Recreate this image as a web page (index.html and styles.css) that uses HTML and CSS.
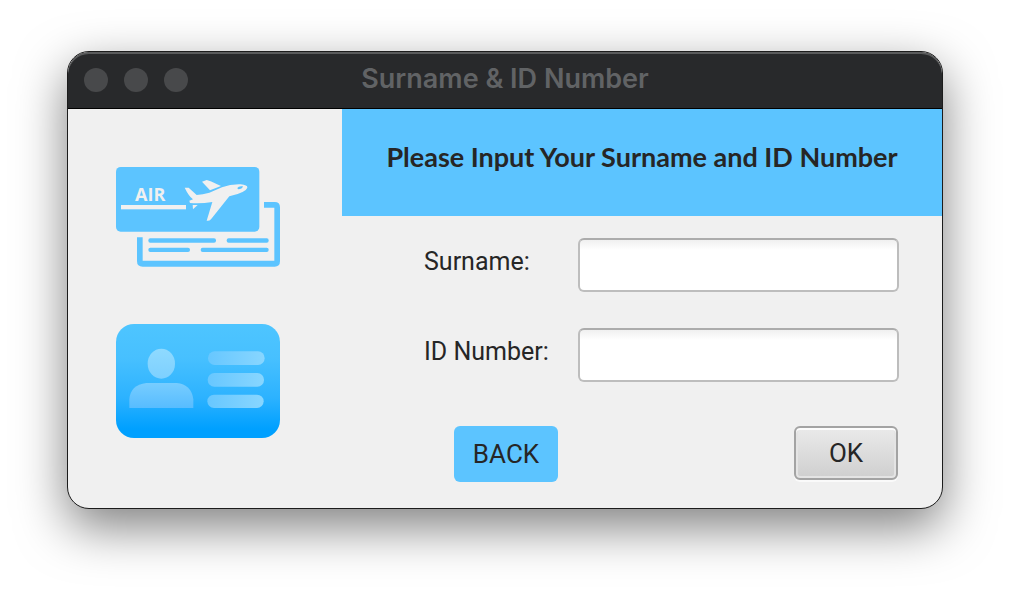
FILE: index.html
```html
<!DOCTYPE html>
<html lang="en">
<head>
<meta charset="utf-8">
<title>Surname &amp; ID Number</title>
<link rel="stylesheet" href="styles.css">
</head>
<body>
<main class="window">
  <header class="titlebar">
    <div class="lights"><span class="light"></span><span class="light"></span><span class="light"></span></div>
    <h1 class="title">Surname &amp; ID Number</h1>
  </header>
  <div class="content">
    <aside class="sidebar">
      <svg class="picture" viewBox="48 36 492 300" role="img" aria-label="Air ticket">
        <g fill="#5cc4ff">
          <rect x="48" y="36" width="430" height="194" rx="14"/>
          <path d="M492 141H524Q540 141 540 157V319Q540 335 524 335H128Q111 335 111 319V247H128V317H523V158H492Z"/>
          <rect x="145" y="250" width="203" height="13" rx="6"/>
          <rect x="380" y="250" width="126" height="13" rx="6"/>
          <rect x="145" y="278" width="125" height="13" rx="6"/>
          <rect x="302" y="278" width="204" height="13" rx="6"/>
        </g>
        <g fill="#f0f0f0">
          <text class="air" x="105" y="138">AIR</text>
          <rect x="63" y="150" width="195" height="13"/>
          <path d="M306 80L320 75Q326 75 363 93L330 106Z"/>
          <path d="M254 98L266 98L290 120Q308 119 328 113L366 97Q392 87 422 88Q443 90 442 98Q438 112 388 124L333 193Q327 199 320 197L337 141Q302 147 270 144L268 137L279 133Q266 123 254 98Z"/>
          <path d="M278 150H293L279 163Z"/>
        </g>
        <path fill="#5cc4ff" d="M412 99Q416 92 429 94Q427 103 414 103Z"/>
      </svg>
      <svg class="picture" viewBox="48 42 492 342" role="img" aria-label="ID card">
        <defs>
          <linearGradient id="card" x1="0" y1="0" x2="0" y2="1">
            <stop offset="0" stop-color="#4ec5ff"/>
            <stop offset=".3" stop-color="#47c0ff"/>
            <stop offset=".65" stop-color="#2cb2ff"/>
            <stop offset=".92" stop-color="#00a0ff"/>
            <stop offset="1" stop-color="#00a0ff"/>
          </linearGradient>
          <linearGradient id="person" gradientUnits="userSpaceOnUse" x1="0" y1="116" x2="0" y2="294">
            <stop offset="0" stop-color="#8fdaff"/>
            <stop offset=".5" stop-color="#7dd0ff"/>
            <stop offset="1" stop-color="#57bcff"/>
          </linearGradient>
          <linearGradient id="bar" x1="0" y1="0" x2="1" y2="0">
            <stop offset="0" stop-color="#67c7ff"/>
            <stop offset="1" stop-color="#88d6ff"/>
          </linearGradient>
        </defs>
        <rect x="48" y="42" width="492" height="342" rx="54" fill="url(#card)"/>
        <g fill="url(#person)">
          <ellipse cx="184" cy="161" rx="41" ry="45"/>
          <path d="M88 294V268Q91 225 139 219H230Q274 223 280 268V294Z"/>
        </g>
        <g fill="url(#bar)">
          <rect x="324" y="124" width="170" height="41" rx="20"/>
          <rect x="323" y="189" width="169" height="41" rx="20"/>
          <rect x="322" y="254" width="169" height="40" rx="20"/>
        </g>
      </svg>
    </aside>
    <section class="main">
      <h2 class="banner">Please Input Your Surname and ID Number</h2>
      <form class="form">
        <label class="label" for="surname">Surname:</label>
        <input class="field" id="surname" type="text">
        <label class="label" for="idnumber">ID Number:</label>
        <input class="field" id="idnumber" type="text">
        <div class="actions">
          <button class="button button-back" type="button">BACK</button>
          <button class="button button-ok" type="submit">OK</button>
        </div>
      </form>
    </section>
  </div>
</main>
</body>
</html>
```
FILE: styles.css
```css
* { box-sizing: border-box; }

body {
  margin: 0;
  padding: 51px 67px 83px;
  background: #fff;
  color: #262626;
  font-family: Roboto, "Liberation Sans", sans-serif;
  font-size: 26px;
}

.window {
  overflow: hidden;
  border: 1px solid #1c1c1c;
  border-radius: 22px;
  background: #f0f0f0;
  box-shadow: 0 18px 50px rgba(0, 0, 0, .5);
}

.titlebar {
  display: grid;
  grid-template-columns: 1fr auto 1fr;
  align-items: center;
  height: 57px;
  padding: 0 16px;
  border-bottom: 1px solid #000;
  border-radius: 21px 21px 0 0;
  background: #28292b;
  box-shadow: inset 0 2px 0 #5a5b5c;
}

.lights { display: flex; gap: 16px; }

.light {
  width: 24px;
  height: 24px;
  border-radius: 50%;
  background: #48494b;
}

.title {
  margin: 0;
  padding-bottom: 2px;
  color: #616365;
  font: 600 27px/32px Inter, sans-serif;
}

.content { display: flex; }

.sidebar {
  display: flex;
  flex: 0 0 274px;
  flex-direction: column;
  gap: 57px;
  padding: 58px 62px 0 48px;
}

.picture { display: block; width: 164px; }

.air { font: 700 54px "Open Sans", sans-serif; }

.main { flex: 1; }

.banner {
  margin: 0;
  padding: 32px 32px 43px;
  background: #5cc4ff;
  font: 700 27px/32px Lato, sans-serif;
  text-align: center;
  white-space: nowrap;
}

.form {
  display: grid;
  grid-template-columns: 154px 1fr;
  row-gap: 36px;
  padding: 22px 43px 26px 82px;
}

.label { font-size: 25px; line-height: 48px; }

.field {
  width: 100%;
  height: 54px;
  padding: 0 12px;
  border: 2px solid #bdbdbd;
  border-top-color: #acacac;
  border-radius: 6px;
  background: linear-gradient(#f0f0f0, #fff 10px);
  font: inherit;
}

.actions {
  display: flex;
  grid-column: 1 / -1;
  align-items: flex-start;
  justify-content: space-between;
  padding: 8px 1px 0 30px;
}

.button {
  width: 104px;
  height: 54px;
  padding: 0;
  border: 0;
  border-radius: 6px;
  color: inherit;
  font: inherit;
}

.button-back { height: 56px; background: #5cc4ff; }

.button-ok {
  border: 2px solid #a3a3a3;
  background: linear-gradient(#eaeaea, #cfcfcf);
  box-shadow: inset 0 2px 0 #fcfcfc, inset 0 0 0 2px #e4e4e4, 0 2px 0 #fafafa;
}
```
